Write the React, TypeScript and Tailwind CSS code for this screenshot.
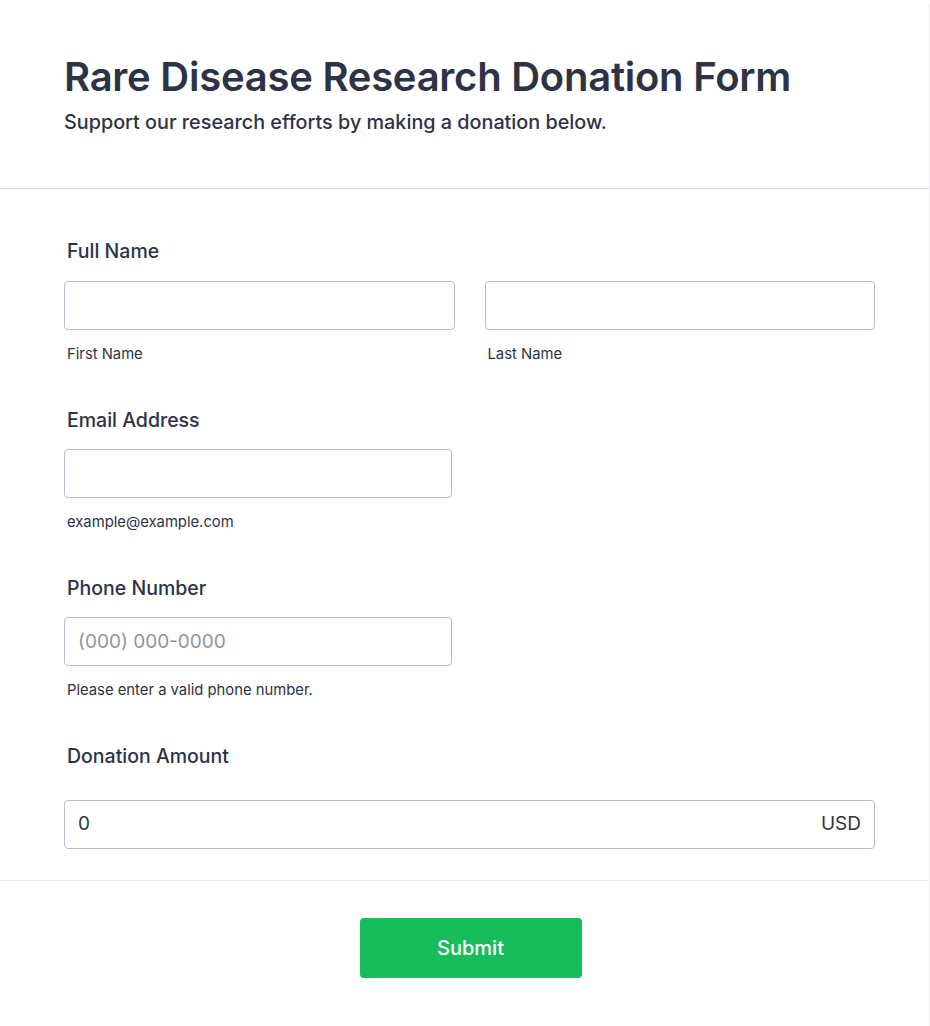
import React from 'react';

const font = { fontFamily: 'Inter, "Noto Sans", sans-serif' };

const Label = ({ children }: { children: React.ReactNode }) => (
  <label className="block pl-[3px] text-[19.5px] leading-6 font-medium text-[#2c3345]">{children}</label>
);

const Sub = ({ children }: { children: React.ReactNode }) => (
  <span className="block mt-[14px] pl-[3px] text-[14.8px] leading-5 text-[#2c3345]">{children}</span>
);

const inputCls =
  'block w-full h-[49px] rounded border border-[#b8bdc9] bg-white px-[13px] text-[19px] text-[#2c3345] placeholder:text-[#8c94a8] outline-none';

export default function App() {
  return (
    <div style={font} className="min-h-[1026px] bg-white border-r border-[#eceef4] rounded-tr-md">
      <header className="pl-16 pr-[54px] pt-[53px] pb-[54px] border-b border-[#d8dae9]">
        <h1 className="text-[40px] leading-[48px] font-semibold text-[#2c3345] tracking-[-0.25px]">
          Rare Disease Research Donation Form
        </h1>
        <p className="mt-[9px] text-[19.8px] leading-6 font-medium text-[#2c3345]">
          Support our research efforts by making a donation below.
        </p>
      </header>

      <form className="pl-16 pr-[54px] pt-[50px] pb-[31px] border-b border-[#e6e8f0]" onSubmit={(e) => e.preventDefault()}>
        <div>
          <Label>Full Name</Label>
          <div className="mt-[18px] grid grid-cols-2 gap-[30px]">
            <div>
              <input className={inputCls} />
              <Sub>First Name</Sub>
            </div>
            <div>
              <input className={inputCls} />
              <Sub>Last Name</Sub>
            </div>
          </div>
        </div>

        <div className="mt-[44px]">
          <Label>Email Address</Label>
          <div className="mt-[17px] w-[388px]">
            <input className={inputCls} />
            <Sub>example@example.com</Sub>
          </div>
        </div>

        <div className="mt-[44px]">
          <Label>Phone Number</Label>
          <div className="mt-[17px] w-[388px]">
            <input className={inputCls} placeholder="(000) 000-0000" />
            <Sub>Please enter a valid phone number.</Sub>
          </div>
        </div>

        <div className="mt-[44px]">
          <Label>Donation Amount</Label>
          <div className="mt-[32px] flex items-center h-[49px] rounded border border-[#b8bdc9] px-[13px] text-[19px] text-[#2c3345]">
            <input className="flex-1 outline-none bg-transparent" defaultValue="0" />
            <span>USD</span>
          </div>
        </div>
      </form>

      <div className="flex justify-center pl-3 pt-[37px] pb-[49px]">
        <button className="w-[222px] h-[60px] rounded bg-[#18bd5b] text-white text-[20px] font-medium">
          Submit
        </button>
      </div>
    </div>
  );
}
